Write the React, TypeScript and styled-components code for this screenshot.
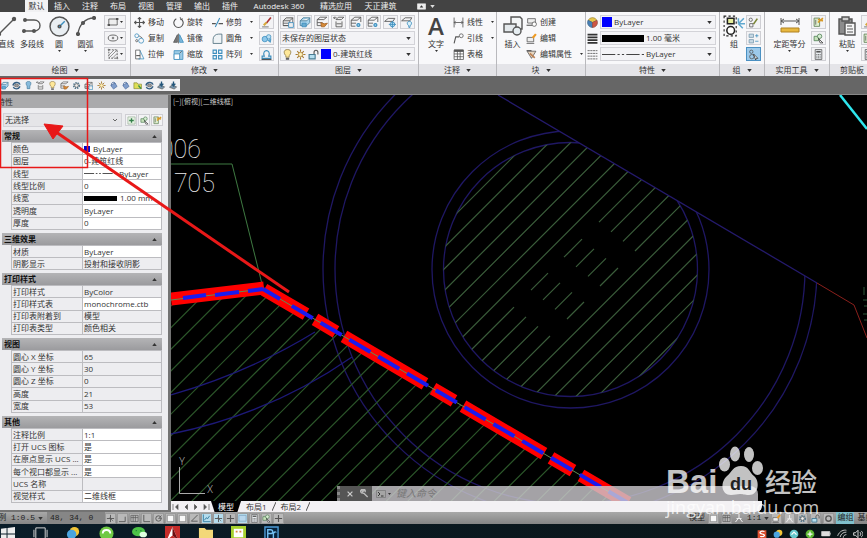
import React from "react";
import styled, { createGlobalStyle, css } from "styled-components";

const Global = createGlobalStyle`
  html, body, #root { height: 100%; }
  body { margin: 0; overflow: hidden; background: #000; }
  * { box-sizing: border-box; }
  button, select, input { font: inherit; color: inherit; margin: 0; padding: 0; border: 0; background: none; }
`;

const Page = styled.div`
  position: relative;
  display: flex;
  flex-direction: column;
  height: 100vh;
  overflow: hidden;
  background: #666;
  color: #333;
  font: 8px/12px "Open Sans", "Noto Sans CJK SC", sans-serif;
  white-space: nowrap;
`;

/* ---------- icons ---------- */

const D = "#555";
const B = "#3b8dbd";

const glyphs: Record<string, React.ReactNode> = {
  line: <><path d="M2 18 17 3" /><circle cx="2" cy="18" r="1.5" fill={D} /><circle cx="17" cy="3" r="1.5" fill={D} /></>,
  polyline: <><path d="M3 4h9c8 0 8 11 0 11H2" /><circle cx="3" cy="4" r="1.3" fill={D} /><circle cx="2" cy="15" r="1.3" fill={D} /><circle cx="12" cy="15" r="1.3" fill={D} /></>,
  circle: <><circle cx="10" cy="10" r="9" fill="#e9eef2" /><path d="m10 10 5-5" stroke={B} /><circle cx="10" cy="10" r="1.3" fill={B} /></>,
  arc: <><path d="M2 18C3 9 9 2 18 2" /><circle cx="2" cy="18" r="1.4" fill={D} /><circle cx="7" cy="7" r="1.4" fill={D} /><circle cx="18" cy="2" r="1.4" fill={D} /></>,
  rect: <><path d="M3 5h14v10H3z" fill="#eee" /><path d="M1 15h4M15 5h4" strokeWidth="3" /></>,
  ellipse: <><ellipse cx="10" cy="10" rx="8" ry="5" /><path d="M8 10h4M10 8v4" /></>,
  hatch: <><path d="M3 3h14v14H3z" strokeDasharray="3 2" /><path d="m3 12 9-9M3 17 17 3M9 17l8-8" strokeWidth="1" /><circle cx="3" cy="3" r="1" /><circle cx="17" cy="17" r="1" /></>,
  move: <path d="M10 1v18M1 10h18M7 4l3-3 3 3M7 16l3 3 3-3M4 7l-3 3 3 3M16 7l3 3-3 3" strokeWidth="2" />,
  rotate: <><path d="M6 3a8.500 8.500 0 1 0 8 0" strokeWidth="2" /><path d="m13 0 1 5 4-2" /></>,
  trim: <><path d="M0 12h7M12 12h8" strokeWidth="2" /><path d="M6 18 14 2" stroke={B} strokeWidth="2" /></>,
  copy: <><circle cx="5" cy="5" r="3.5" stroke={B} /><circle cx="13" cy="14" r="4.500" stroke={B} /><circle cx="5" cy="14" r="2" /><path d="m9 5 6 4" /></>,
  mirror: <><path d="M8 3v14H1z" fill="#777" /><path d="M12 3v14h7z" fill="#7db9dc" stroke={B} /><path d="M10 1v18" /></>,
  fillet: <path d="M2 19V12C2 6 6 2 12 2h6v17z" fill="#eef3f6" stroke="#467" />,
  stretch: <><path d="M3 2h8v16H3z" fill="#fff" /><path d="m11 3 7 15H8" stroke={B} /><path d="M4 12h7" strokeWidth="2" /></>,
  scale: <><path d="M2 3h16v16H2z" fill="#9bcbe5" stroke={B} /><path d="M2 9h10v10H2z" fill="#fff" stroke={B} /><path d="m12 8 4-4" /></>,
  array: <><path d="M2 2h6v6H2zM12 2h6v6h-6zM2 12h6v6H2zM12 12h6v6h-6z" stroke={B} strokeWidth="2" /></>,
  brush: <><path d="m18 1-8 10" stroke="#a33" strokeWidth="3" /><path d="m10 10-5 5" stroke="#d7a83a" strokeWidth="4" /><path d="M2 18h12" /></>,
  explode: <><circle cx="7" cy="11" r="5" fill="#8cc6e9" stroke={B} /><circle cx="14" cy="7" r="4" fill="#b9def2" stroke={B} /><path d="m12 13 5 4 1-7" fill="#59a7d3" stroke={B} /></>,
  offset: <><path d="M2 17h16v-4h-4c3-7-1-10-4-10S3 6 6 13H2z" stroke={B} strokeWidth="2" /><path d="M1 19h18" strokeWidth="2" /></>,
  layers: <><path d="m2 8 5-5h11l-5 5zM2 12h10M2 16h10" fill="#ddd" /><path d="M2 8v8h11V8M18 3v9l-5 4" /><path d="M11 11h8v8h-8z" fill="#eee" stroke={B} /></>,
  layersBlue: <><path d="m2 8 5-5h11l-5 5zM2 8v8h11l5-5V3" fill="#a6d3ec" stroke="#427896" /><path d="M5 12h7v6H5z" fill="#69acd0" stroke={B} /></>,
  layersHand: <><path d="m2 6 5-4h11l-5 4zM2 6v10h9M2 11h9" /><path d="m8 11 6 2 5-1-5 6H9z" fill="#d68a36" stroke="#a76427" /></>,
  layersBack: <><path d="m5 6 4-4h9l-4 4zM5 9v9h10V9" fill="#eee" /><path d="M1 3h5M3 1 1 3l2 2M6 13h8" /></>,
  layersFreeze: <><path d="m2 7 6-5h10l-6 5zM2 7v10h7M2 12h8M18 2v8" /><circle cx="14" cy="15" r="2.500" fill="#8cc9e6" stroke={B} strokeWidth="2" /></>,
  layerSun: <><path d="m1 9 6-5h11l-3 5z" /><circle cx="14" cy="14" r="4" fill="#b7e2f2" stroke={B} /><path d="M14 8v12M8 14h12" stroke={B} /></>,
  layerBulb: <><path d="m1 8 6-5h11l-3 5z" /><path d="M14 9c6 0 3 7 1 7v3h-2v-3c-2 0-5-7 1-7" fill="#d7f0fa" stroke={B} /></>,
  bulb: <><path d="M10 1c9 0 6 9 3 11v3H7v-3C4 10 1 1 10 1z" fill="#ffe899" stroke="#8a7540" /><path d="M7 18h6" strokeWidth="3" /></>,
  bulbBlue: <><path d="M10 1c8 0 5 8 3 10v6H7v-6C5 9 2 1 10 1z" fill="#87bbdc" stroke="#397397" /></>,
  sun: <><circle cx="10" cy="10" r="4" fill="#fff1b6" stroke="#a87c31" /><path d="M10 1v4M10 15v4M1 10h4M15 10h4M4 4l3 3M13 13l3 3M16 4l-3 3M7 13l-3 3" stroke="#a87c31" strokeWidth="2" /></>,
  lock: <><path d="M2 10h11v8H2z" fill="#b5deef" stroke="#477b93" strokeWidth="2" /><path d="M11 9V6c0-5 7-5 7 0v4" strokeWidth="2" /></>,
  dim: <><path d="M2 1v18M18 1v18M2 10h16M5 7l-3 3 3 3M15 7l3 3-3 3" strokeWidth="1.500" /></>,
  leader: <><path d="m2 19 3-12h6" strokeWidth="2" /><circle cx="15" cy="5" r="3.5" /></>,
  table: <><path d="M2 2h17v17H2z" fill="#fff" /><path d="M2 4h17M2 9h17M2 14h17M8 3v16M13 3v16" /><path d="M2 3h17" strokeWidth="4" /></>,
  insert: <><path d="M8 1h9l2 2v10H8z" fill="#f3f5f6" /><path d="M1 8h12v8H1z" fill="#e4e9ec" /><circle cx="14" cy="15" r="4" fill="#e6edf1" /></>,
  create: <><path d="M3 3h14v8H3z" fill="#eee" /><path d="M1 15h10" strokeWidth="2" /><circle cx="15" cy="13" r="4" fill="#fff" /></>,
  edit: <><path d="M2 8h12v8H2z" fill="#eee" /><path d="M1 19h14" /><path d="m12 9 6-7" stroke="#ee9a22" strokeWidth="4" /></>,
  attr: <><path d="m2 4 8 13 8-13z" fill="#e7d6c0" /><path d="m7 8 9 8" stroke="#bd8153" strokeWidth="3" /><path d="M1 3h9" strokeWidth="2" /></>,
  wheel: <><path d="M10 10 2 6a9 9 0 0 1 16 0z" fill="#e6c64b" stroke="#a48d44" /><path d="M10 10v9a9 9 0 0 1-8-13z" fill="#4880b6" stroke="#406a8e" /><path d="M10 10v9a9 9 0 0 0 8-13z" fill="#cf5744" stroke="#965045" /></>,
  weights: <path d="M1 3h18M1 8h18M1 13h18M1 18h18" strokeWidth="3" stroke="#333" />,
  types: <path d="M1 3h18M1 8h18M1 13h18M1 18h18" strokeDasharray="4 1" strokeWidth="1.500" />,
  group: <><path d="M1 1h11v18H1z" strokeDasharray="2 2" stroke="#222" strokeWidth="1" /><path d="M4 3h6v5H4z" fill="#e6ef9c" stroke="#222" /><circle cx="7" cy="14" r="3.500" fill="#fff" stroke="#222" /><path d="M14 8 19 3M14 8h6M14 8l4 4M14 8V3" stroke="#60a8cf" /></>,
  pick: <><circle cx="6" cy="5" r="3" /><circle cx="7" cy="14" r="4" /><path d="m10 9 8 8-3 0-1 3z" fill="#fff" stroke="#333" /></>,
  pen: <><circle cx="5" cy="5" r="3" /><path d="M3 12h6v6H3z" /><path d="m10 13 7-10" stroke="#7a8535" strokeWidth="3" /></>,
  plus: <><path d="M2 2h8v6H2zM2 12h8v6H2z" fill="#c9dae5" stroke="#7899ae" /><path d="M13 5h6M16 2v6M13 15h6" stroke={B} /></>,
  measure: <><path d="M1 2v7M19 2v7M1 5h18M4 3 1 5l3 2M16 3l3 2-3 2" strokeWidth="1" /><path d="M1 12h18v4H1z" fill="#e8b840" stroke="#b08120" strokeWidth="1" /></>,
  filter: <><path d="M2 2h10v15H2z" fill="#dff0d0" stroke="#547549" /><path d="m9 10 9-8M9 4l9 3" stroke="#d79927" strokeWidth="3" /><path d="M5 5v9" /></>,
  shapes: <><path d="M2 6h8v8H2z" fill="#c6e1bb" stroke="#4a7b50" /><circle cx="12" cy="6" r="4" fill="#d7edd2" stroke="#4a7b50" /><path d="m10 10 8 8h-5z" fill="#fff" stroke="#333" /></>,
  calc: <><path d="M4 1h12v18H4z" fill="#e9edf0" /><path d="M6 5h8" strokeWidth="3" /><path d="M6 10h8M6 13h8M6 16h8" strokeDasharray="2 1" /></>,
  paste: <><path d="M2 3h13v15H2z" fill="#8c8c8c" /><path d="M5 1h7v4H5z" fill="#ccc" /><path d="M8 7h10v12H8z" fill="#f7f7f7" /><path d="M10 10h5M10 13h6M10 16h6" strokeWidth="1" /></>,
  addGreen: <><path d="M2 2h16v16H2z" fill="#e8f3e5" stroke="#93aa93" /><path d="M10 5v10M5 10h10" stroke="#34814a" strokeWidth="3" /></>,
  swirl: <><path d="M2 10c2-8 14-9 16-2M18 12c-4 8-14 6-15 1" stroke="#345e82" strokeWidth="3" /><ellipse cx="10" cy="10" rx="5" ry="3" fill="#999" /></>,
  gear: <><circle cx="10" cy="10" r="6" stroke="#55798f" strokeDasharray="3 2" strokeWidth="4" /><circle cx="10" cy="10" r="4" fill="#eee" /></>,
  lockBlue: <><path d="m4 10 9-6 5 8-8 6z" fill="#809dcb" stroke="#4e6d9d" /><path d="M5 10c0-10 9-8 9-3" stroke="#4e6d9d" strokeWidth="2" /></>,
  folder: <><path d="M2 4h7l2 3h8v10H2z" fill="#dddf57" stroke="#838537" /><path d="m12 10 6 7" stroke="#388c4c" strokeWidth="3" /></>,
  drop: <><path d="m1 14 5-5 11 4-5 5z" fill="#7795ad" /><path d="M10 1v9M6 6l4 5 4-5" stroke="#24567b" strokeWidth="3" /></>,
  cross: <path d="M10 2v16M2 10h16" strokeWidth="2.500" />,
  snap: <><path d="M10 2v16M2 10h16" strokeWidth="2" /><path d="m8 8 8 8" /></>,
  corner: <path d="M2 17h14V6" strokeWidth="2" />,
  grid: <path d="M2 3h16v14H2zM2 8h16M7 3v14M12 3v14" strokeWidth="1.500" />,
  ortho: <path d="M4 2v15h14" strokeWidth="2" />,
  polar: <><circle cx="10" cy="10" r="6" strokeWidth="2" /><path d="M10 10 17 3M10 10h7" /></>,
  box: <path d="M3 3h14v14H3z" fill="#f8f8f8" strokeWidth="1" />,
  angle: <path d="M17 2 3 16h14" strokeWidth="2" />,
  chart: <path d="M3 1v16h16M5 14l5-6 2 3 5-7" stroke="#347da0" strokeWidth="2" />,
  screen: <path d="M2 3h16v13H2z" fill="#b9d7ec" stroke="#729bb7" />,
  ring: <circle cx="10" cy="10" r="6" strokeWidth="3" />,
  person: <path d="M10 2v7L3 18M10 9l7 9M5 11h10" strokeWidth="2" stroke="#eee" />,
  wrench: <path d="m17 18-9-9M8 9C1 10 0 4 3 2l3 4 3-3-4-2c5-2 8 2 6 6" stroke="#bbb" strokeWidth="3" />,
  close: <path d="m4 4 12 12M16 4 4 16" stroke="#ccc" strokeWidth="3" />,
  prompt: <><path d="M1 3h18v14H1z" fill="#a5a5a5" stroke="#777" /><path d="m4 6 4 4-4 4M10 14h5" stroke="#333" strokeWidth="2" /></>,
  video: <><path d="M1 4h18v12H1z" fill="#eee" stroke="#eee" /><path d="m10 7 4 5H6z" fill="#333" stroke="none" /></>,
  first: <><path d="M4 4v12" /><path d="m14 5-5 5 5 5z" fill={D} /></>,
  prev: <path d="m13 5-5 5 5 5z" fill={D} />,
  next: <path d="m7 5 5 5-5 5z" fill={D} />,
  last: <><path d="M16 4v12" /><path d="m6 5 5 5-5 5z" fill={D} /></>,
};

const Glyph = styled.svg<{ $s: number }>`
  width: ${(p) => p.$s}px;
  height: ${(p) => p.$s}px;
  flex: none;
  display: block;
`;

const Icon = ({ name, size = 12 }: { name: string; size?: number }) => (
  <Glyph $s={size} viewBox="0 0 20 20" fill="none" stroke={D} strokeWidth="1.400" aria-hidden="true">
    {glyphs[name]}
  </Glyph>
);

const CaretSvg = styled.svg<{ $small?: boolean }>`
  width: ${(p) => (p.$small ? 3 : 5)}px;
  height: ${(p) => (p.$small ? 2 : 3)}px;
  flex: none;
  display: block;
`;
const Caret = ({ up, small }: { up?: boolean; small?: boolean }) => (
  <CaretSvg $small={small} viewBox="0 0 6 4" aria-hidden="true">
    <path d={up ? "M0 4 3 0l3 4z" : "M0 0h6L3 4z"} fill="#333" />
  </CaretSvg>
);
const ChevronSvg = styled.svg`
  width: 6px;
  height: 4px;
  flex: none;
`;
const Chevron = () => (
  <ChevronSvg viewBox="0 0 6 4" aria-hidden="true">
    <path d="m1 1 2 2 2-2" fill="none" stroke="#666" />
  </ChevronSvg>
);

/* ---------- menu tabs ---------- */

const MenuBar = styled.nav`
  display: flex;
  align-items: stretch;
  flex: none;
  height: 12px;
  padding-left: 25px;
  background: #434343;
`;
const MenuTab = styled.button<{ $on?: boolean; $wide?: number }>`
  width: ${(p) => p.$wide ?? 28}px;
  color: #f0f0f0;
  text-align: center;
  ${(p) =>
    p.$on &&
    css`
      background: #f1f1f3;
      color: #333;
    `}
`;
const MenuExtra = styled.button`
  display: flex;
  align-items: center;
  gap: 4px;
  margin-left: 14px;
  path:only-child { fill: #ddd; }
`;

/* ---------- ribbon ---------- */

const RibbonBar = styled.header`
  display: flex;
  flex: none;
  height: 64px;
  background: #f8f8fa;
  overflow: hidden;
`;
const Group = styled.section<{ $w: number }>`
  display: flex;
  flex-direction: column;
  flex: 0 0 ${(p) => p.$w}px;
  min-width: 0;
  border-right: 1px solid #b9b9bd;
`;
const GroupBody = styled.div<{ $pad?: number }>`
  display: flex;
  flex: 1;
  padding: 2px 0 2px ${(p) => p.$pad ?? 3}px;
`;
const GroupTitle = styled.button`
  display: flex;
  align-items: center;
  justify-content: center;
  gap: 6px;
  flex: none;
  height: 12px;
  width: 100%;
  background: #e4e4e8;
  line-height: 12px;
`;
const BigButton = styled.button<{ $w: number }>`
  display: flex;
  flex-direction: column;
  align-items: center;
  flex: 0 0 ${(p) => p.$w}px;
  min-width: 0;
  height: 44px;
  line-height: 10px;
  gap: 1px;
`;
const BigArt = styled.span`
  display: grid;
  place-items: center;
  height: 24px;
`;
const Letter = styled.span`
  font: 600 24px/24px "Open Sans", sans-serif;
  color: #444;
`;
const Stack = styled.div<{ $w?: number }>`
  display: grid;
  grid-template-rows: repeat(3, 16px);
  align-items: center;
  width: ${(p) => (p.$w ? `${p.$w}px` : "auto")};
  flex: none;
`;
const Tool = styled.button`
  display: flex;
  align-items: center;
  gap: 3px;
  svg:last-child:not(:first-child) { margin-left: 5px; }
`;
const Box = styled.button<{ $on?: boolean; $w?: number }>`
  display: flex;
  align-items: center;
  justify-content: space-evenly;
  width: ${(p) => p.$w ?? 15}px;
  height: 14px;
  border: 1px solid ${(p) => (p.$on ? "#4a90c2" : "#cfcfd4")};
  background: ${(p) => (p.$on ? "#9cc9ea" : "#f3f3f5")};
`;
const Rows = styled.div`
  display: grid;
  grid-template-rows: repeat(3, 16px);
  align-items: center;
  flex: 1;
  min-width: 0;
  padding-right: 3px;
`;
const IconLine = styled.div`
  display: flex;
  justify-content: space-between;
`;
const Combo = styled.label`
  display: flex;
  align-items: center;
  gap: 2px;
  height: 14px;
  padding: 0 3px 0 1px;
  border: 1px solid #d3d3d8;
  background: #f3f3f6;
  min-width: 0;
`;
const Pick = styled.select`
  appearance: none;
  flex: 1;
  min-width: 0;
  outline: 0;
  line-height: 12px;
`;
const PropLine = styled.div`
  display: grid;
  grid-template-columns: 10px 1fr;
  gap: 3px;
  align-items: center;
`;
const Swatch = styled.span<{ $w: number; $h: number; $c: string }>`
  flex: none;
  width: ${(p) => p.$w}px;
  height: ${(p) => p.$h}px;
  background: ${(p) => p.$c};
`;
const LineSample = styled.svg<{ $w: number }>`
  flex: none;
  width: ${(p) => p.$w}px;
  height: 3px;
`;
const DashSample = ({ w }: { w: number }) => (
  <LineSample $w={w} viewBox="0 0 38 3" preserveAspectRatio="none">
    <path d="M0 1.500h38" stroke="#444" strokeDasharray="12 2 2 2 2 2" />
  </LineSample>
);

const Big = ({ w, icon, label, caret, size = 20 }: { w: number; icon: string; label: string; caret?: boolean; size?: number }) => (
  <BigButton $w={w}>
    <BigArt><Icon name={icon} size={size} /></BigArt>
    {label}
    {caret && <Caret small />}
  </BigButton>
);
const Small = ({ icon, label, caret }: { icon: string; label: string; caret?: boolean }) => (
  <Tool><Icon name={icon} size={11} />{label}{caret && <Caret small />}</Tool>
);
const Title = ({ children }: { children: React.ReactNode }) => <GroupTitle>{children}<Caret /></GroupTitle>;

const tabs: [string, number?][] = [["插入"], ["注释"], ["布局"], ["视图"], ["管理"], ["输出"], ["插件"], ["Autodesk 360", 70], ["精选应用", 44], ["天正建筑", 45]];

const Ribbon = () => (
  <RibbonBar>
    <Group $w={131}>
      <GroupBody $pad={0}>
        <Big w={13} icon="line" label="直线" />
        <Big w={38} icon="polyline" label="多段线" />
        <Big w={16} icon="circle" label="圆" caret size={21} />
        <Big w={37} icon="arc" label="圆弧" caret />
        <Stack>
          {["rect", "ellipse", "hatch"].map((n) => <Box key={n} $w={22} aria-label={n}><Icon name={n} size={12} /><Caret small /></Box>)}
        </Stack>
      </GroupBody>
      <Title>绘图</Title>
    </Group>
    <Group $w={148}>
      <GroupBody>
        <Stack $w={39}><Small icon="move" label="移动" /><Small icon="copy" label="复制" /><Small icon="stretch" label="拉伸" /></Stack>
        <Stack $w={39}><Small icon="rotate" label="旋转" /><Small icon="mirror" label="镜像" /><Small icon="scale" label="缩放" /></Stack>
        <Stack $w={47}><Small icon="trim" label="修剪" caret /><Small icon="fillet" label="圆角" caret /><Small icon="array" label="阵列" caret /></Stack>
        <Stack>{["brush", "explode", "offset"].map((n) => <Box key={n} aria-label={n}><Icon name={n} size={11} /></Box>)}</Stack>
      </GroupBody>
      <Title>修改</Title>
    </Group>
    <Group $w={140}>
      <GroupBody $pad={1}>
        <Rows>
          <IconLine>
            {["layers", "layersBlue", "layersHand", "layersBack", "layersFreeze", "layersFreeze", "layerSun", "layerBulb"].map((n, i) => (
              <Box key={i} aria-label={n}><Icon name={n} size={12} /></Box>
            ))}
          </IconLine>
          <Combo><Pick aria-label="图层状态"><option>未保存的图层状态</option></Pick><Caret /></Combo>
          <Combo>
            <Icon name="bulb" size={11} /><Icon name="sun" size={11} /><Icon name="lock" size={11} />
            <Swatch $w={10} $h={10} $c="#00f" />
            <Pick aria-label="图层"><option>0-建筑红线</option></Pick><Caret />
          </Combo>
        </Rows>
      </GroupBody>
      <Title>图层</Title>
    </Group>
    <Group $w={78}>
      <GroupBody $pad={0}>
        <BigButton $w={34}><BigArt><Letter>A</Letter></BigArt>文字<Caret small /></BigButton>
        <Stack><Small icon="dim" label="线性" caret /><Small icon="leader" label="引线" caret /><Small icon="table" label="表格" /></Stack>
      </GroupBody>
      <Title>注释</Title>
    </Group>
    <Group $w={89}>
      <GroupBody $pad={2}>
        <Big w={27} icon="insert" label="插入" />
        <Stack><Small icon="create" label="创建" /><Small icon="edit" label="编辑" /><Small icon="attr" label="编辑属性" caret /></Stack>
      </GroupBody>
      <Title>块</Title>
    </Group>
    <Group $w={134}>
      <GroupBody $pad={1}>
        <Rows>
          <PropLine><Icon name="wheel" size={11} /><Combo><Swatch $w={10} $h={10} $c="#00f" /><Pick aria-label="颜色"><option>ByLayer</option></Pick><Caret /></Combo></PropLine>
          <PropLine><Icon name="weights" size={11} /><Combo><Swatch $w={42} $h={7} $c="#000" /><Pick aria-label="线宽"><option>1.00 毫米</option></Pick><Caret /></Combo></PropLine>
          <PropLine><Icon name="types" size={11} /><Combo><DashSample w={42} /><Pick aria-label="线型"><option>ByLayer</option></Pick><Caret /></Combo></PropLine>
        </Rows>
      </GroupBody>
      <Title>特性</Title>
    </Group>
    <Group $w={45}>
      <GroupBody $pad={2}>
        <Big w={24} icon="group" label="组" size={22} />
        <Stack>
          <Box aria-label="编辑组"><Icon name="pen" size={11} /></Box>
          <Box aria-label="添加"><Icon name="plus" size={11} /></Box>
          <Box $on aria-label="组选择"><Icon name="pick" size={11} /></Box>
        </Stack>
      </GroupBody>
      <Title>组</Title>
    </Group>
    <Group $w={65}>
      <GroupBody>
        <Big w={43} icon="measure" label="定距等分" caret />
        <Stack>{["filter", "shapes", "calc"].map((n) => <Box key={n} aria-label={n}><Icon name={n} size={11} /></Box>)}</Stack>
      </GroupBody>
      <Title>实用工具</Title>
    </Group>
    <Group $w={56}>
      <GroupBody>
        <Big w={28} icon="paste" label="粘贴" caret />
        <Stack>{["brush", "filter", "calc"].map((n) => <Box key={n} aria-label={n}><Icon name={n} size={11} /></Box>)}</Stack>
      </GroupBody>
      <Title>剪贴板</Title>
    </Group>
  </RibbonBar>
);

const ToolbarArea = styled.div`
  flex: none;
  height: 19px;
  padding-top: 3px;
  background: #666;
  border-bottom: 1px solid #888;
`;
const Toolbar = styled.div`
  display: flex;
  align-items: center;
  justify-content: space-between;
  width: 180px;
  height: 12px;
  padding-right: 2px;
  background: #f1f1f3;
`;

/* ---------- properties palette ---------- */

const Workspace = styled.main`
  display: flex;
  flex: 1;
  min-height: 0;
`;
const Palette = styled.aside`
  flex: 0 0 171px;
  background: #ededf0;
  border-right: 3px solid #737373;
  border-bottom: 2px solid #737373;
  overflow: hidden;
`;
const PaletteTitle = styled.h2`
  margin: 0;
  height: 13px;
  background: #aaaaac;
  font: inherit;
  line-height: 13px;
  text-indent: -3px;
`;
const Selection = styled.div`
  display: flex;
  align-items: center;
  gap: 1px;
  margin: 5px 5px 3px 3px;
`;
const SelectionBox = styled(Combo)`
  flex: 1;
  margin-right: 2px;
  background: #e5e5e8;
`;
const MiniBox = styled(Box)`
  width: 12px;
  height: 12px;
`;
const Section = styled.section`
  margin: 0 6px 3px 2px;
`;
const SectionHead = styled.button`
  display: flex;
  align-items: center;
  justify-content: space-between;
  width: 100%;
  height: 12px;
  padding: 0 5px 0 2px;
  background: linear-gradient(#b4b4b6, #9b9b9e);
  color: #111;
  font-weight: 700;
  line-height: 12px;
`;
const PropTable = styled.table<{ $n: number }>`
  width: calc(100% - 9px);
  height: ${(p) => Math.floor(p.$n * 12.6)}px;
  margin-left: 9px;
  border-collapse: collapse;
  table-layout: fixed;
  th, td {
    padding: 0 0 0 1px;
    border: 1px solid #bcbcc0;
    font-weight: 400;
    text-align: left;
    line-height: 10px;
    overflow: hidden;
    white-space: nowrap;
  }
  th { width: 71px; }
`;
const Value = styled.td<{ $fixed?: boolean }>`
  background: ${(p) => (p.$fixed ? "transparent" : "#fff")};
`;
const Inline = styled.span`
  display: flex;
  align-items: center;
  gap: 3px;
`;

type Row = [string, React.ReactNode, boolean?];
const sections: [string, Row[]][] = [
  ["常规", [
    ["颜色", <Inline><Swatch $w={6} $h={6} $c="#00c" />ByLayer</Inline>],
    ["图层", "0-建筑红线"],
    ["线型", <Inline><DashSample w={32} />ByLayer</Inline>],
    ["线型比例", "0"],
    ["线宽", <Inline><Swatch $w={33} $h={5} $c="#000" />1.00 mm</Inline>],
    ["透明度", "ByLayer"],
    ["厚度", "0"],
  ]],
  ["三维效果", [["材质", "ByLayer"], ["阴影显示", "投射和接收阴影", true]]],
  ["打印样式", [["打印样式", "ByColor", true], ["打印样式表", "monochrome.ctb"], ["打印表附着到", "模型", true], ["打印表类型", "颜色相关", true]]],
  ["视图", [["圆心 X 坐标", "65", true], ["圆心 Y 坐标", "30", true], ["圆心 Z 坐标", "0", true], ["高度", "21", true], ["宽度", "53", true]]],
  ["其他", [["注释比例", "1:1"], ["打开 UCS 图标", "是"], ["在原点显示 UCS ...", "是"], ["每个视口都显示 ...", "是"], ["UCS 名称", "", true], ["视觉样式", "二维线框"]]],
];

const Properties = () => (
  <Palette>
    <PaletteTitle>特性</PaletteTitle>
    <Selection>
      <SelectionBox><Pick aria-label="选择"><option>无选择</option></Pick><Chevron /></SelectionBox>
      {["addGreen", "shapes", "filter"].map((n) => <MiniBox key={n} aria-label={n}><Icon name={n} size={9} /></MiniBox>)}
    </Selection>
    {sections.map(([name, rows]) => (
      <Section key={name}>
        <SectionHead>{name}<Caret up /></SectionHead>
        <PropTable $n={rows.length}>
          <tbody>
            {rows.map(([k, v, fixed]) => (
              <tr key={k}><th scope="row">{k}</th><Value $fixed={fixed}>{v}</Value></tr>
            ))}
          </tbody>
        </PropTable>
      </Section>
    ))}
  </Palette>
);

/* ---------- drawing ---------- */

const View = styled.div`
  display: flex;
  flex-direction: column;
  flex: 1;
  min-width: 0;
  background: #000;
`;
const Canvas = styled.div`
  position: relative;
  flex: 1;
  min-height: 0;
  overflow: hidden;
`;
const Drawing = styled.svg`
  display: block;
  width: 100%;
  height: 100%;
`;

const STEP = 21.6;
const ridge = (x: number) => 289 + (x - 263) * 0.586;
const redDashes = [[264, 306], [315, 336], [344, 425], [433, 454], [463, 544], [551, 573], [581, 628]];
const blueDashes = Array.from({ length: 13 }, (_, i) => [263 + i * 28.8, Math.min(263 + i * 28.8 + (i ? 21 : 17), 628)]);
const diag = (c: number, x1: number, x2: number) => `M${x1} ${c - x1}L${x2} ${c - x2}`;
const ringHatch = Array.from({ length: 17 }, (_, k) => k)
  .filter((k) => k < 7 || k > 10)
  .map((k) => diag(670 + k * STEP, 430, 710))
  .join("");
const brokenHatch = [0, 1, 2, 3]
  .map((j) => {
    const c = 670 + (7 + j) * STEP;
    const s = j * 12;
    return [[440 - s, 514], [531, 548], [564, 582], [599, 680]].map(([a, b]) => diag(c, a + s, b + s)).join("");
  })
  .join("");
const groundHatch = Array.from({ length: 32 }, (_, k) => diag(477 + k * STEP, 150, 700)).join("");

const Plan = () => (
  <Drawing viewBox="171 95 696 406" preserveAspectRatio="xMinYMin slice" fill="none">
    <defs>
      <clipPath id="below"><path d="M171 95H498L817 283V501H171z" /></clipPath>
      <clipPath id="disc"><circle cx="570.500" cy="269.500" r="127" /></clipPath>
      <clipPath id="ground"><path d="M171 300 264 289 628 503H171z" /></clipPath>
    </defs>
    <g clipPath="url(#below)">
      <g stroke="#1f1763" strokeWidth="1.300">
        <circle cx="570.500" cy="269.500" r="127" />
        <circle cx="570.500" cy="269.500" r="138.500" />
        <circle cx="570" cy="269" r="235" />
        <circle cx="570" cy="269" r="247" />
      </g>
      <g clipPath="url(#disc)" stroke="#3a5c3a" strokeWidth="1.200"><path d={ringHatch + brokenHatch} /></g>
    </g>
    <path d="M498 95 817 283" stroke="#241a6c" strokeWidth="1.300" />
    <path d="m817 283 37 22 13 33" stroke="#8a201c" />
    <path d="m840 95 27 34" stroke="#2fe6ee" strokeWidth="2.500" />
    <path d="M864 287v8m-1 5h4m-3 6h3m-4 8h4m-3 6h3" stroke="#2c5639" />
    <path d={groundHatch} clipPath="url(#ground)" stroke="#2b5529" strokeWidth="1.200" />
    <path d="M171 395Q250 372 315 332M171 434Q270 414 352 357" stroke="#1d1978" strokeWidth="1.300" />
    <path d="M171 164h61l31 124" stroke="#3f7a42" />
    <path d="m171 299 93-11" stroke="#f00" strokeWidth="13" />
    <path d={redDashes.map(([a, b]) => `M${a} ${ridge(a)}L${b} ${ridge(b)}`).join("")} stroke="#f00" strokeWidth="13" />
    <path d="m171 300 92-11 365 214" stroke="#5f8d55" />
    <path d={"M183 298l23-3M215 295l24-3M248 291l15-2" + blueDashes.map(([a, b]) => `M${a} ${ridge(a)}L${b} ${ridge(b)}`).join("")} stroke="#1a1aee" strokeWidth="4" />
    <path d="M179.500 467v26.500H205" stroke="#aaa" />
    <g fill="#aaa" fontFamily="Roboto, sans-serif" fontWeight="300">
      <text x="179" y="465" fontSize="10">Y</text>
      <text x="207" y="493" fontSize="10">X</text>
      <text x="173" y="104" fontSize="7" fontWeight="400" fill="#ccc" fontFamily="Noto Sans CJK SC, sans-serif">[−][俯视][二维线框]</text>
      <text x="201" y="158" fontSize="25" fontWeight="100" fill="#eee" textAnchor="end">006</text>
      <text x="215" y="192" fontSize="25" fontWeight="100" fill="#eee" textAnchor="end">705</text>
    </g>
  </Drawing>
);

const CommandBar = styled.div`
  position: absolute;
  left: 166px;
  right: 109px;
  bottom: 0;
  display: flex;
  align-items: center;
  height: 15px;
  background: rgba(205, 203, 207, 0.8);
  border-radius: 2px 8px 0 0;
`;
const CommandTools = styled.div`
  display: flex;
  align-items: center;
  gap: 6px;
  width: 35px;
  height: 100%;
  padding-left: 6px;
  margin-right: 4px;
  background: #555;
  border-left: 3px dotted #888;
`;
const BareButton = styled.button`
  display: flex;
  align-items: center;
  gap: 2px;
`;
const CommandInput = styled.input`
  flex: 1;
  min-width: 0;
  margin-left: 5px;
  outline: 0;
  font-size: 10px;
  line-height: 13px;
  font-style: italic;
  &::placeholder { color: #777; opacity: 1; }
`;
const SheetBar = styled.div`
  display: flex;
  align-items: center;
  flex: none;
  height: 11px;
  margin-right: 105px;
  background: #f3f1f4;
  border-radius: 0 0 6px 0;
`;
const SheetTab = styled.button<{ $on?: boolean }>`
  height: 11px;
  padding: 0 ${(p) => (p.$on ? 7 : 5)}px;
  line-height: 11px;
  ${(p) =>
    p.$on &&
    css`
      background: #000;
      color: #fff;
      clip-path: polygon(0 0, 100% 0, 88% 100%, 12% 100%);
    `}
`;
const SlashSvg = styled.svg`
  width: 4px;
  height: 11px;
  flex: none;
`;
const Slash = () => <SlashSvg viewBox="0 0 4 11" aria-hidden="true"><path d="M4 1 0 10" stroke="#555" /></SlashSvg>;

/* ---------- status and task bars ---------- */

const StatusBar = styled.footer`
  display: flex;
  align-items: center;
  flex: none;
  height: 12px;
  background: linear-gradient(#a8a8a8, #858585);
  font-family: "Liberation Mono", "Noto Sans CJK SC", monospace;
  color: #222;
  overflow: hidden;
`;
const Scale = styled.button`
  display: flex;
  align-items: center;
  justify-content: flex-end;
  gap: 3px;
  width: 43px;
  margin-right: 4px;
`;
const Coordinates = styled.output`
  width: 58px;
  padding-left: 3px;
  background: #868686;
`;
const StatusButton = styled.button<{ $on?: boolean }>`
  display: grid;
  place-items: center;
  flex: none;
  width: 11px;
  height: 11px;
  background: ${(p) => (p.$on ? "#b5dced" : "#b9b9b9")};
  border: 1px solid #9a9a9a;
`;
const StatusIcons = styled.div`
  display: flex;
  gap: 1px;
`;
const StatusRight = styled.div`
  display: flex;
  align-items: center;
  gap: 2px;
  margin-left: auto;
  width: 179px;
`;
const StatusText = styled.button<{ $on?: boolean }>`
  flex: none;
  padding: 0 1px;
  background: ${(p) => (p.$on ? "#7fc0cc" : "transparent")};
`;
const TaskBar = styled.footer`
  display: flex;
  justify-content: space-between;
  flex: none;
  height: 14px;
  padding: 5px 4px 0 0;
  background: linear-gradient(90deg, #0a1c28, #0b1517);
  overflow: hidden;
`;
const TaskIcons = styled.div<{ $gap: number }>`
  display: flex;
  gap: ${(p) => p.$gap}px;
`;

const taskArt: React.ReactNode[] = [
  <path d="M1 3 7 2v6H1zM8 2l8-1v7H8zM1 9h6v6H1zM8 9h8v6H8z" fill="#eee" />,
  <path d="M3 2h10v12H3zM1 4v8M15 4v8" fill="none" stroke="#ddd" />,
  <><circle cx="9" cy="6" r="5" fill="#f4c637" /><circle cx="6" cy="9" r="5" fill="#49a4e0" /></>,
  <><circle cx="8" cy="8" r="7.500" fill="#71c944" /><path d="M4 8c0-5 8-5 8 0" fill="none" stroke="#fff" strokeWidth="2" /></>,
  <><ellipse cx="7" cy="6" rx="7" ry="5" fill="#4dc247" /><ellipse cx="12" cy="9" rx="4" ry="3" fill="#dfffe0" /><path d="M4 5h1M9 5h1" stroke="#053" /></>,
  <><path d="M0 0h16v16H0z" fill="#c52c2a" /><path d="m2 15 6-14 6 14-6-5z" fill="#fff" /><path d="m8 1 6 14-6-5z" fill="#6d0d10" /></>,
  <path d="M1 2h6l2 2h7v12H1z" fill="#f3d878" />,
  <><path d="M0 0h16v16H0z" fill="#a7d12e" /><path d="M3 3h10v9H3z" fill="#fff" /><path d="M5 5h2v2H5zM9 5h2v2H9z" fill="#d84" /></>,
  <><path d="M1 1h14v15H1z" fill="#06233c" stroke="#4d9bd5" strokeWidth="1.500" /><path d="M4 13V4h3c3 0 3 4 0 4H4M10 13V8c0-2 3-2 3-1" fill="none" stroke="#72bff2" strokeWidth="1.500" /></>,
];
const trayArt: React.ReactNode[] = [
  <><path d="M1 2h14v14H1z" fill="#dc4e2e" /><path d="M12 4C5 2 2 7 8 8s5 5-3 4" fill="none" stroke="#fff" strokeWidth="2" /></>,
  <><circle cx="10" cy="6" r="5" fill="#f4c637" /><circle cx="6" cy="9" r="5" fill="#49a4e0" /></>,
  <><circle cx="8" cy="8" r="7" fill="#65c6cc" /><path d="m4 9 4-4 4 4" stroke="#fff" strokeWidth="2" fill="none" /></>,
  <><circle cx="8" cy="8" r="7" fill="#5eb832" /><path d="M8 4v8M4 8h8" stroke="#fff" strokeWidth="2" /></>,
  <path d="M1 4h13v7H1zM15 6v3" fill="#ddd" stroke="#ddd" />,
  <path d="M1 11C4 3 11 1 15 2M5 13c1-5 5-8 10-8M10 14c0-3 2-5 5-5" fill="none" stroke="#ccc" strokeWidth="1.500" />,
  <path d="M1 6h3l4-4v12l-4-4H1zM11 5c2 2 2 4 0 6M13 3c4 4 4 7 0 10" fill="none" stroke="#ddd" strokeWidth="1.500" />,
];
const Art = ({ children, size }: { children: React.ReactNode; size: number }) => (
  <BareButton><Glyph $s={size} viewBox="0 0 16 16" aria-hidden="true">{children}</Glyph></BareButton>
);

/* ---------- overlays ---------- */

const Callout = styled.svg`
  position: absolute;
  left: 0;
  top: 0;
  width: 300px;
  height: 300px;
  pointer-events: none;
`;
const Watermark = styled.svg`
  position: absolute;
  right: 43px;
  bottom: 13px;
  width: 160px;
  height: 82px;
  pointer-events: none;
`;

const statusLeft = ["snap", "corner", "grid", "ortho", "polar", "box", "box", "angle", "chart", "snap", "cross", "screen", "calc", "shapes", "cross"];
const quickTools = ["layersBlue", "swirl", "bulbBlue", "layersBack", "bulb", "layersHand", "gear", "layers", "sun", "lockBlue", "lockBlue", "folder", "swirl", "drop", "drop"];

export default function App() {
  return (
    <Page>
      <Global />
      <MenuBar>
        <MenuTab $on $wide={23}>默认</MenuTab>
        {tabs.map(([t, w]) => <MenuTab key={t} $wide={w}>{t}</MenuTab>)}
        <MenuExtra aria-label="更多"><Icon name="video" size={9} /><Caret /></MenuExtra>
      </MenuBar>
      <Ribbon />
      <ToolbarArea>
        <Toolbar>{quickTools.map((n, i) => <BareButton key={i} aria-label={n}><Icon name={n} size={9} /></BareButton>)}</Toolbar>
      </ToolbarArea>
      <Workspace>
        <Properties />
        <View>
          <Canvas>
            <Plan />
            <CommandBar>
              <CommandTools>
                <BareButton aria-label="关闭"><Icon name="close" size={8} /></BareButton>
                <BareButton aria-label="设置"><Icon name="wrench" size={9} /></BareButton>
              </CommandTools>
              <BareButton aria-label="历史"><Icon name="prompt" size={10} /><Caret small /></BareButton>
              <CommandInput aria-label="命令" placeholder="键入命令" />
            </CommandBar>
          </Canvas>
          <SheetBar>
            {["first", "prev", "next", "last"].map((n) => <BareButton key={n} aria-label={n}><Icon name={n} size={10} /></BareButton>)}
            <SheetTab $on>模型</SheetTab>
            <SheetTab>布局1</SheetTab>
            <Slash />
            <SheetTab>布局2</SheetTab>
            <Slash />
          </SheetBar>
        </View>
      </Workspace>
      <StatusBar>
        <Scale>比例 1:0.5<Caret /></Scale>
        <Coordinates>48, 34, 0</Coordinates>
        <StatusIcons>
          {statusLeft.map((n, i) => <StatusButton key={i} $on={[8, 9, 11].includes(i)} aria-label={n}><Icon name={n} size={9} /></StatusButton>)}
        </StatusIcons>
        <StatusRight>
          <StatusText>模型</StatusText>
          <StatusButton aria-label="布局"><Icon name="box" size={9} /></StatusButton>
          <StatusButton aria-label="快速查看"><Icon name="grid" size={9} /></StatusButton>
          <Icon name="person" size={10} />
          <StatusText>1:1</StatusText><Caret />
          {["edit", "person", "gear", "lock", "ring"].map((n) => <StatusButton key={n} aria-label={n}><Icon name={n} size={9} /></StatusButton>)}
          <StatusText $on>编组</StatusText>
          <StatusText>基线</StatusText>
        </StatusRight>
      </StatusBar>
      <TaskBar>
        <TaskIcons $gap={18}>{taskArt.map((a, i) => <Art key={i} size={15}>{a}</Art>)}</TaskIcons>
        <TaskIcons $gap={6}>{trayArt.map((a, i) => <Art key={i} size={10}>{a}</Art>)}</TaskIcons>
      </TaskBar>
      <Callout viewBox="0 0 300 300" fill="none" stroke="#e81818">
        <path d="M0 78.500h87.500v89H0M.5 78v89" strokeWidth="1.500" />
        <path d="m56 132 233 160" strokeWidth="3" />
        <path d="m44 124 19 2-10 13z" fill="#e81818" />
      </Callout>
      <Watermark viewBox="664 443 160 82">
        <g fill="#fff" opacity="0.76">
          <text x="666" y="493" fontFamily="Liberation Sans, sans-serif" fontWeight="700" fontSize="33">Bai</text>
          <ellipse cx="724.500" cy="464.500" rx="5.500" ry="7" />
          <ellipse cx="735" cy="454" rx="5" ry="7.500" />
          <ellipse cx="749" cy="454.500" rx="5" ry="7.500" />
          <ellipse cx="757.500" cy="468" rx="5.500" ry="7" />
          <path d="M741 466c8 0 8 6 13 10 6 5 5 19-5 19-5 0-6-1-9-1s-5 1-9 1c-10 0-11-13-4-19 5-4 6-10 14-10z" />
          <text x="765" y="492" fontFamily="Noto Sans CJK SC, sans-serif" fontWeight="500" fontSize="26">经验</text>
          <text x="666" y="514" fontFamily="Open Sans, sans-serif" fontSize="18">jingyan.baidu.com</text>
        </g>
        <text x="730" y="490" fontFamily="Liberation Sans, sans-serif" fontWeight="700" fontSize="18" fill="#222">du</text>
      </Watermark>
    </Page>
  );
}
